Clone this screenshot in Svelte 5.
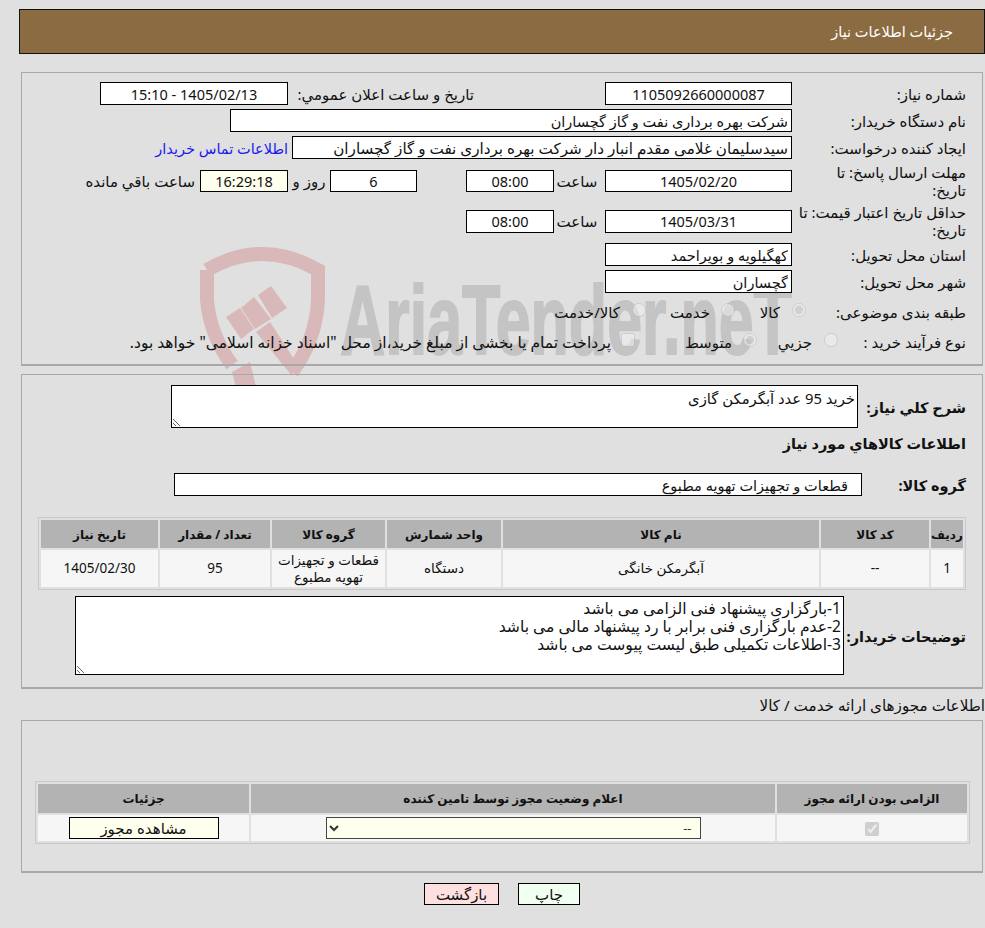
<script lang="ts">
  const goodsColumns = ["ردیف", "کد کالا", "نام کالا", "واحد شمارش", "گروه کالا", "تعداد / مقدار", "تاریخ نیاز"];
  const goodsRow = ["1", "--", "آبگرمکن خانگی", "دستگاه", "قطعات و تجهیزات تهویه مطبوع", "95", "1405/02/30"];
  const licenseColumns = ["الزامی بودن ارائه مجوز", "اعلام وضعیت مجوز توسط تامین کننده", "جزئیات"];
  const buyerNotes = `1-بارگزاری پیشنهاد فنی الزامی می باشد
2-عدم بارگزاری فنی برابر با رد پیشنهاد مالی می باشد
3-اطلاعات تکمیلی طبق لیست پیوست می باشد`;
</script>

<div class="page" dir="rtl">
  <div class="watermark" aria-hidden="true">
    <svg class="shield" width="135" height="150" viewBox="195 245 135 150">
      <path d="M207 270 Q262 238 318 270 L318 300 Q316 340 292 372" />
      <path d="M207 270 L207 300 Q210 335 232 365" />
      <polygon class="solid" points="226,317 240,308 254,329 241,339" />
      <polygon class="solid" points="241,308 254,297 271,319 255,329" />
      <polygon class="solid" points="258,295 271,286 287,308 272,318" />
      <polygon class="solid" points="256,332 270,322 296,362 292,376" />
      <polygon class="solid" points="250,362 232,372 238,395 258,395" />
    </svg>
    <span class="wordmark" dir="ltr">AriaTender.neT</span>
  </div>

  <header class="title-bar">جزئیات اطلاعات نیاز</header>

  <section class="panel main">
    <div class="row">
      <span class="label">شماره نیاز:</span>
      <input class="field wide center" readonly value="1105092660000087" />
      <span class="announce-label">تاریخ و ساعت اعلان عمومي:</span>
      <input class="field announce center" readonly value="1405/02/13 - 15:10" />
    </div>
    <div class="row">
      <span class="label">نام دستگاه خریدار:</span>
      <input class="field buyer" readonly value="شرکت بهره برداری نفت و گاز گچساران" />
    </div>
    <div class="row">
      <span class="label">ایجاد کننده درخواست:</span>
      <input class="field creator" readonly value="سیدسلیمان غلامی مقدم انبار دار شرکت بهره برداری نفت و گاز گچساران" />
      <a class="contact" href="#contact">اطلاعات تماس خریدار</a>
    </div>
    <div class="row tall">
      <span class="label">مهلت ارسال پاسخ: تا<br />تاریخ:</span>
      <input class="field wide center short" readonly value="1405/02/20" />
      <span class="hour">ساعت</span>
      <input class="field time center short" readonly value="08:00" />
      <input class="field days center short" readonly value="6" />
      <span class="day-word">روز و</span>
      <input class="field remain center short" readonly value="16:29:18" />
      <span class="remain-word">ساعت باقي مانده</span>
    </div>
    <div class="row tall">
      <span class="label">حداقل تاریخ اعتبار قیمت: تا تاریخ:</span>
      <input class="field wide center" readonly value="1405/03/31" />
      <span class="hour">ساعت</span>
      <input class="field time center" readonly value="08:00" />
    </div>
    <div class="row">
      <span class="label">استان محل تحویل:</span>
      <input class="field wide" readonly value="کهگیلویه و بویراحمد" />
    </div>
    <div class="row">
      <span class="label">شهر محل تحویل:</span>
      <input class="field wide" readonly value="گچساران" />
    </div>
    <div class="row options first-options">
      <span class="label category">طبقه بندی موضوعی:</span>
      <label class="opt kala"><input type="radio" name="cat" disabled checked /><span>کالا</span></label>
      <label class="opt khedmat"><input type="radio" name="cat" disabled /><span>خدمت</span></label>
      <label class="opt both"><input type="radio" name="cat" disabled /><span>کالا/خدمت</span></label>
    </div>
    <div class="row options">
      <span class="label process">نوع فرآیند خرید :</span>
      <label class="opt jozi"><input type="radio" name="proc" disabled /><span>جزيي</span></label>
      <label class="opt motevaset"><input type="radio" name="proc" disabled checked /><span>متوسط</span></label>
      <label class="opt treasury"><input type="checkbox" disabled /><span>پرداخت تمام یا بخشی از مبلغ خرید،از محل "اسناد خزانه اسلامی" خواهد بود.</span></label>
    </div>
  </section>

  <section class="panel details">
    <div class="summary">
      <span class="strong-label">شرح كلي نياز:</span>
      <textarea class="summary-box" readonly>خرید 95 عدد آبگرمکن گازی</textarea>
    </div>
    <h2 class="goods-heading">اطلاعات كالاهاي مورد نياز</h2>
    <div class="group-row">
      <span class="strong-label">گروه کالا:</span>
      <input class="field group-box" readonly value="قطعات و تجهیزات تهویه مطبوع" />
    </div>
    <table class="grid goods">
      <thead>
        <tr>{#each goodsColumns as col}<th>{col}</th>{/each}</tr>
      </thead>
      <tbody>
        <tr>{#each goodsRow as cell}<td>{cell}</td>{/each}</tr>
      </tbody>
    </table>
    <div class="notes">
      <span class="strong-label">توضیحات خریدار:</span>
      <textarea class="notes-box" readonly value={buyerNotes}></textarea>
    </div>
  </section>

  <div class="license-title">اطلاعات مجوزهای ارائه خدمت / کالا</div>

  <section class="panel license">
    <table class="grid licenses">
      <thead>
        <tr>{#each licenseColumns as col}<th>{col}</th>{/each}</tr>
      </thead>
      <tbody>
        <tr>
          <td><input type="checkbox" checked disabled /></td>
          <td><select class="status"><option>--</option></select></td>
          <td><button class="view">مشاهده مجوز</button></td>
        </tr>
      </tbody>
    </table>
  </section>

  <div class="actions">
    <button class="action print">چاپ</button>
    <button class="action back">بازگشت</button>
  </div>
</div>

<style>
  :global(body) {
    background: #e0e0e0;
  }
  .page {
    position: relative;
    height: 928px;
    overflow: hidden;
    box-sizing: border-box;
    padding-top: 9px;
    font-family: "Noto Sans", "DejaVu Sans", sans-serif;
    font-size: 15px;
    color: #111;
  }
  .watermark {
    position: absolute;
    left: 195px;
    top: 245px;
    width: 620px;
    height: 150px;
  }
  .shield {
    position: absolute;
    left: 0;
    top: 0;
  }
  .shield path {
    fill: none;
    stroke: #d9b8ba;
    stroke-width: 14;
  }
  .shield .solid {
    fill: #d9b8ba;
  }
  .wordmark {
    position: absolute;
    left: 145px;
    top: 20px;
    font-family: "Liberation Sans", sans-serif;
    font-weight: bold;
    font-size: 98px;
    line-height: 110px;
    color: #c4c4c4;
    -webkit-text-stroke: 2px #c4c4c4;
    white-space: nowrap;
    transform: scaleX(0.64);
    transform-origin: left top;
  }
  .title-bar,
  .panel,
  .license-title,
  .actions {
    position: relative;
  }
  .title-bar {
    height: 43px;
    margin-left: 19px;
    border: 1px solid #111;
    background: #8b6b41;
    color: #fff;
    font-size: 14.5px;
    line-height: 43px;
    padding-right: 31px;
  }
  .panel {
    margin-left: 21px;
    margin-right: 2px;
    border: 2px solid #a8a8a8;
    border-width: 1px 1px 2px 1px;
    box-sizing: border-box;
  }
  .main {
    height: 294px;
    margin-top: 18px;
    padding: 9px 16px 0 0;
  }
  .row {
    display: flex;
    align-items: center;
    min-height: 23px;
    margin-bottom: 4px;
  }
  .row.tall {
    min-height: 36px;
  }
  .row.options {
    min-height: 22px;
    margin-bottom: 8px;
  }
  .first-options {
    margin-top: 8px;
  }
  .label {
    flex: 0 0 174px;
    line-height: 18px;
  }
  .field {
    box-sizing: border-box;
    height: 23px;
    border: 1px solid #000;
    background: #fff;
    font: inherit;
    font-size: 14.5px;
    color: #111;
    padding: 0 3px;
    outline: none;
    direction: rtl;
  }
  .field.short {
    height: 22px;
  }
  .center {
    text-align: center;
  }
  .wide {
    width: 187px;
  }
  .buyer {
    width: 562px;
  }
  .field.creator {
    width: 500px;
    font-size: 15.2px;
  }
  .announce-label {
    margin-right: 131px;
    width: 186px;
  }
  .announce {
    width: 188px;
  }
  .contact {
    margin-right: 4px;
    color: #1a1aee;
    font-size: 14.5px;
    text-decoration: none;
  }
  .hour {
    width: 46px;
    margin-right: 5px;
    text-align: center;
  }
  .time {
    width: 88px;
  }
  .days {
    width: 87px;
    margin-right: 49px;
  }
  .day-word {
    width: 42px;
    text-align: center;
  }
  .remain {
    width: 88px;
    background: #ffffee;
  }
  .remain-word {
    margin-right: 5px;
  }
  .opt {
    display: flex;
    align-items: center;
  }
  .opt input {
    flex: none;
    margin: 0 0 4px 0;
    width: 14px;
    height: 14px;
    opacity: 0.7;
  }
  .category {
    flex-basis: 160px;
  }
  .kala {
    gap: 12px;
    width: 71px;
  }
  .khedmat {
    gap: 11px;
    width: 89px;
  }
  .both {
    gap: 12px;
  }
  .process {
    flex-basis: 128px;
  }
  .jozi {
    gap: 12px;
    width: 81px;
  }
  .motevaset {
    gap: 11px;
    width: 122px;
  }
  .treasury {
    gap: 10px;
    font-size: 15.5px;
  }
  .details {
    height: 315px;
    margin-top: 8px;
    padding: 10px 16px 0 0;
  }
  .strong-label {
    font-weight: bold;
    font-size: 14.5px;
  }
  .summary {
    display: flex;
    align-items: center;
    height: 43px;
  }
  .summary .strong-label {
    width: 108px;
  }
  .summary-box,
  .notes-box {
    box-sizing: border-box;
    border: 1px solid #000;
    background: #fff;
    font: inherit;
    color: #111;
    outline: none;
    direction: rtl;
    padding: 2px;
  }
  .summary-box {
    width: 687px;
    height: 43px;
    font-size: 14.8px;
  }
  .goods-heading {
    margin: 5px 0 0 0;
    height: 40px;
    font-size: 14.5px;
    line-height: 21px;
  }
  .group-row {
    display: flex;
    align-items: center;
    height: 23px;
  }
  .group-row .strong-label {
    width: 104px;
  }
  .group-box {
    width: 688px;
    padding-right: 13px;
  }
  .grid {
    border-collapse: separate;
    border-spacing: 2px;
    border: 1px solid #c8c8c8;
    table-layout: fixed;
  }
  .grid th {
    background: #b3b3b3;
    font-size: 12px;
    font-weight: bold;
    padding: 0;
  }
  .grid td {
    background: #f6f6f6;
    text-align: center;
    font-size: 13.5px;
    padding: 0;
    line-height: 17px;
  }
  .goods {
    width: 928px;
    margin-top: 21px;
  }
  .goods th {
    height: 28px;
  }
  .goods td {
    height: 37px;
  }
  .goods th:nth-child(1) { width: 32px; }
  .goods th:nth-child(2) { width: 108px; }
  .goods th:nth-child(3) { width: 316px; }
  .goods th:nth-child(4) { width: 114px; }
  .goods th:nth-child(5) { width: 113px; }
  .goods th:nth-child(6) { width: 110px; }
  .notes {
    display: flex;
    align-items: center;
    margin-top: 6px;
  }
  .notes .strong-label {
    width: 122px;
  }
  .notes-box {
    width: 769px;
    height: 79px;
    font-size: 15.6px;
    line-height: 18px;
  }
  .license-title {
    margin-top: 7px;
    height: 24px;
    font-size: 15.2px;
    line-height: 18px;
  }
  .license {
    height: 153px;
    padding: 60px 12px 0 0;
  }
  .licenses {
    width: 935px;
  }
  .licenses th {
    height: 29px;
  }
  .licenses td {
    height: 26px;
  }
  .licenses th:nth-child(1) { width: 190px; }
  .licenses th:nth-child(2) { width: 524px; }
  .licenses input {
    margin: 0;
    width: 14px;
    height: 14px;
    vertical-align: middle;
  }
  .status {
    box-sizing: border-box;
    display: block;
    width: 375px;
    height: 22px;
    margin: 0 auto;
    border: 1px solid #444;
    background: #ffffee;
    font: inherit;
    font-size: 13px;
    color: #333;
    padding: 0 4px;
  }
  .view {
    display: block;
    box-sizing: border-box;
    width: 150px;
    height: 22px;
    margin: 0 auto;
    border: 1px solid #000;
    background: #ffffee;
    font: inherit;
    font-size: 15px;
    color: #111;
    padding: 0;
  }
  .actions {
    display: flex;
    justify-content: center;
    gap: 19px;
    margin-top: 10px;
    padding-left: 19px;
  }
  .action {
    box-sizing: border-box;
    height: 22px;
    border: 1px solid #000;
    font: inherit;
    color: #111;
    padding: 0;
  }
  .print {
    width: 62px;
    background: #f0fff0;
  }
  .back {
    width: 75px;
    background: #ffe0e0;
  }
</style>
